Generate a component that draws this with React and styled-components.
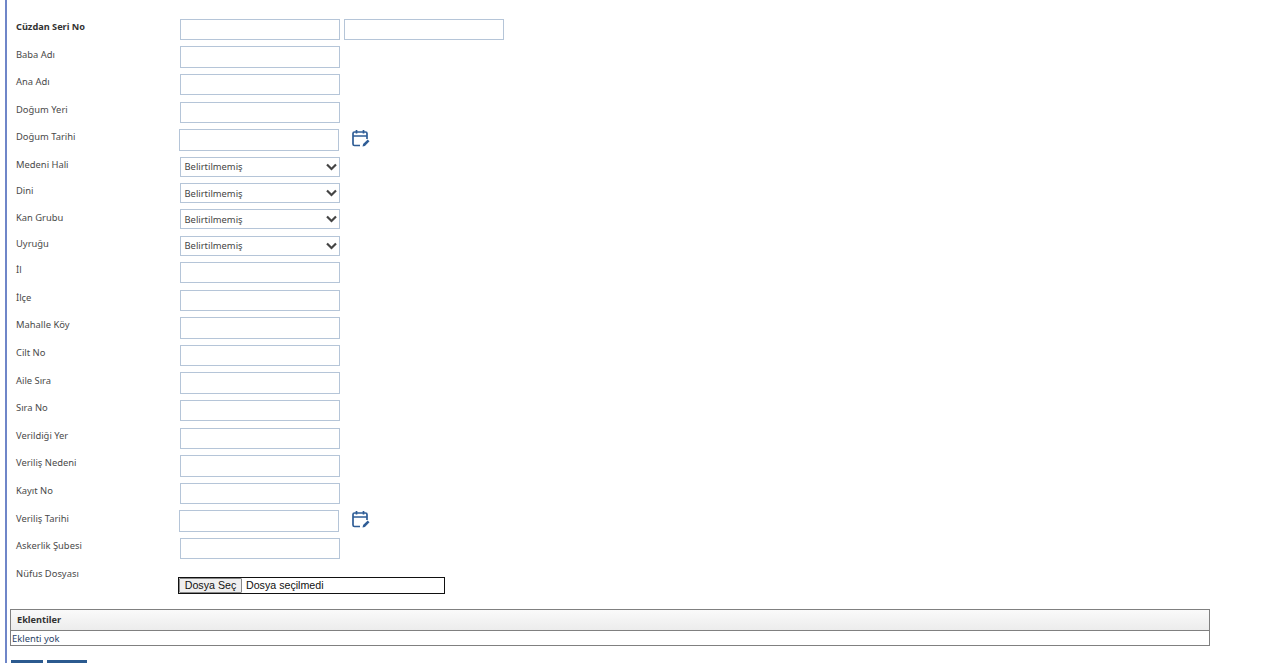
import React from 'react';
import styled, { createGlobalStyle } from 'styled-components';

const Global = createGlobalStyle`
  html, body { margin: 0; padding: 0; background: #fff; height: 663px; overflow: hidden; }
  body { font-family: "Noto Sans", sans-serif; font-size: 9.4px; color: #444; }
`;

const Page = styled.div`
  margin-left: 5px;
  border-left: 2px solid #6f86c8;
  height: 663px;
  overflow: hidden;
  padding: 18.8px 0 0 3px;
  box-sizing: border-box;
`;

const Row = styled.div`
  display: grid;
  grid-template-columns: 170px 1fr;
  height: ${p => (p.$compact ? 26.3 : 27.6)}px;
  align-items: start;
`;

const Label = styled.div`
  padding: 1.3px 0 0 6px;
  font-size: ${p => (p.$bold ? 9.2 : 9.4)}px;
  line-height: 13px;
  font-weight: ${p => (p.$bold ? 700 : 400)};
  color: ${p => (p.$bold ? '#333' : '#4a4a4a')};
`;

const Cell = styled.div`
  display: flex;
  align-items: flex-start;
  gap: 4px;
`;

const Input = styled.input`
  box-sizing: border-box;
  width: 160px;
  height: 21.5px;
  margin-left: ${p => (p.$shift ? -1 : 0)}px;
  border: 1px solid #b5c5d8;
  background: #fff;
  outline: none;
  padding: 0 4px;
`;

const Select = styled.div`
  box-sizing: border-box;
  width: 160px;
  height: 20px;
  border: 1px solid #b5c5d8;
  padding: 0 0 0 3.5px;
  display: flex;
  align-items: center;
  justify-content: space-between;
  font-size: 9.4px;
  color: #444;
`;

const Chevron = styled.svg`
  width: 11px;
  height: 8px;
  margin-right: 2px;
`;

const CalendarButton = styled.svg`
  width: 20px;
  height: 20px;
  margin-left: 8px;
`;

const FileRow = styled.div`
  display: flex;
  margin-left: -2px;
  margin-top: 11.4px;
  width: 267px;
  height: 17px;
  box-sizing: border-box;
  border: 1px solid #111;
  font-family: "Liberation Sans", sans-serif;
  font-size: 10.67px;
  color: #111;
  align-items: stretch;
`;

const FileButton = styled.div`
  box-sizing: border-box;
  width: 63px;
  background: #efefef;
  border: 1px solid #888;
  border-radius: 1px;
  display: flex;
  align-items: center;
  justify-content: center;
  color: #111;
`;

const FileStatus = styled.div`
  padding-left: 4px;
  display: flex;
  align-items: center;
`;

const Attachments = styled.div`
  box-sizing: border-box;
  width: 1200px;
  margin: 15.8px 0 0 0;
  border: 1px solid #808080;
`;

const AttachmentsHead = styled.div`
  height: 20px;
  padding-left: 6px;
  display: flex;
  align-items: center;
  font-weight: 700;
  font-size: 9.2px;
  color: #333;
  background: linear-gradient(#fafafa, #ececec);
  border-bottom: 1px solid #808080;
`;

const AttachmentsBody = styled.div`
  height: 14px;
  padding-left: 1px;
  font-size: 9.4px;
  line-height: 15px;
  color: #2a3f66;
`;

const Actions = styled.div`
  display: flex;
  gap: 4px;
  margin: 14px 0 0 1px;
`;

const ActionButton = styled.div`
  width: ${p => p.$w}px;
  height: 20px;
  background: #2b5a8f;
`;

const Calendar = () => (
  <CalendarButton viewBox="0 0 20 20" fill="none" stroke="#2f5d96" strokeWidth="1.7">
    <path d="M9 16.5H3.5a1.5 1.5 0 0 1-1.5-1.5V4.5A1.5 1.5 0 0 1 3.5 3h11A1.5 1.5 0 0 1 16 4.5V10" />
    <path d="M2 7h14M5.5 1v3.5M12.5 1v3.5" />
    <path d="M11.5 17.5l.6-2.4 4.6-4.6 1.8 1.8-4.6 4.6z" fill="#2f5d96" stroke="none" />
  </CalendarButton>
);

const Caret = () => (
  <Chevron viewBox="0 0 11 8" fill="none" stroke="#444" strokeWidth="2.2">
    <path d="M1 1.5L5.5 6 10 1.5" />
  </Chevron>
);

const rows = [
  ['Baba Adı'], ['Ana Adı'], ['Doğum Yeri'], ['Doğum Tarihi', 'date'],
  ['Medeni Hali', 'select'], ['Dini', 'select'], ['Kan Grubu', 'select'], ['Uyruğu', 'select'],
  ['İl'], ['İlçe'], ['Mahalle Köy'], ['Cilt No'], ['Aile Sıra'], ['Sıra No'],
  ['Verildiği Yer'], ['Veriliş Nedeni'], ['Kayıt No'], ['Veriliş Tarihi', 'date'], ['Askerlik Şubesi'],
];

export default function App() {
  return (
    <>
      <Global />
      <Page>
        <Row>
          <Label $bold>Cüzdan Seri No</Label>
          <Cell><Input /><Input /></Cell>
        </Row>
        {rows.map(([label, kind]) => (
          <Row key={label} $compact={kind === 'select'}>
            <Label>{label}</Label>
            <Cell>
              {kind === 'select' ? (
                <Select>Belirtilmemiş<Caret /></Select>
              ) : (
                <Input $shift={kind === 'date'} />
              )}
              {kind === 'date' && <Calendar />}
            </Cell>
          </Row>
        ))}
        <Row>
          <Label>Nüfus Dosyası</Label>
          <FileRow>
            <FileButton>Dosya Seç</FileButton>
            <FileStatus>Dosya seçilmedi</FileStatus>
          </FileRow>
        </Row>
        <Attachments>
          <AttachmentsHead>Eklentiler</AttachmentsHead>
          <AttachmentsBody>Eklenti yok</AttachmentsBody>
        </Attachments>
        <Actions>
          <ActionButton $w={32} />
          <ActionButton $w={40} />
        </Actions>
      </Page>
    </>
  );
}
